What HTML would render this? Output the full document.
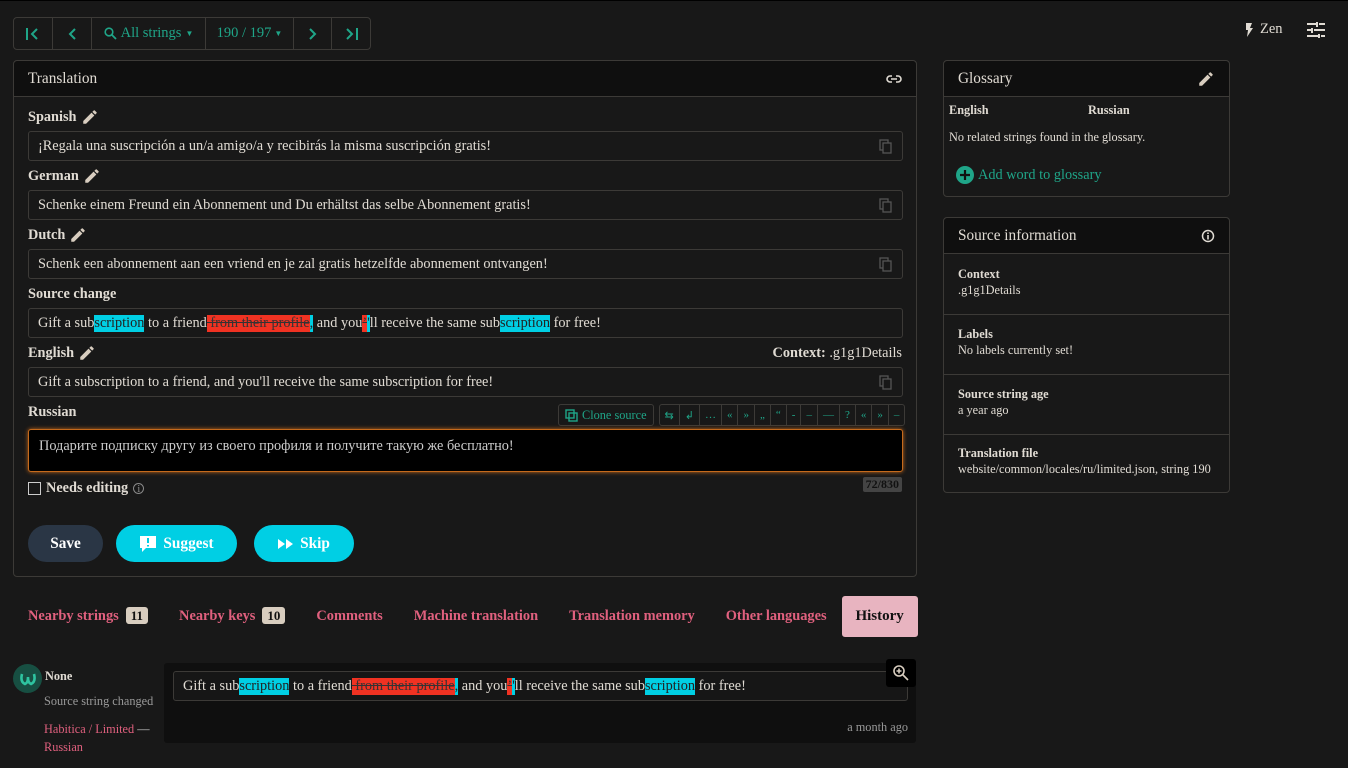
<!DOCTYPE html>
<html><head><meta charset="utf-8"><style>
*{box-sizing:border-box;margin:0;padding:0}
body{width:1348px;height:768px;background:#181818;font-family:"Liberation Serif",serif;color:#e0dbd3;font-size:14px;position:relative;overflow:hidden;border-top:1px solid #000}
.abs{position:absolute}
.g{color:#1fa588}
.nav{left:13px;top:16px;height:33px;border:1px solid #3c3a37;border-radius:4px;display:flex}
.nav div{border-right:1px solid #3c3a37;display:flex;align-items:center;justify-content:center;color:#1fa588;font-size:14.5px}
.nav div:last-child{border-right:none}
.panel{border:1px solid #3c3a37;border-radius:4px;background:#181818}
.ph{background:#0f0f0f;border-bottom:1px solid #3c3a37;height:36px;padding:0 14px;display:flex;align-items:center;justify-content:space-between;font-size:15.3px;border-radius:4px 4px 0 0}
.lbl{position:absolute;left:14px;font-weight:bold;font-size:14.3px;display:flex;align-items:center;gap:4px}
.inp{position:absolute;left:14px;width:875px;height:30px;border:1px solid #3c3a37;border-radius:3px;padding:0 9px;display:flex;align-items:center;font-size:14.3px}
.cp{position:absolute;right:10px;top:7px}
.hc{background:#00cfe4;color:#222}
.hr{background:#f03222;color:#333;text-decoration:line-through}
.btn{position:absolute;top:464px;height:37px;border-radius:19px;display:flex;align-items:center;justify-content:center;font-weight:bold;color:#fff;font-size:15.3px;gap:6px}
.tabs{top:595px;left:13px;height:41px;display:flex;align-items:center;font-weight:bold;color:#e0607e;font-size:14.4px}
.badge{background:#d8cdbf;color:#111;border-radius:3px;padding:1px 5px;font-size:13px;margin-left:7px}
.tb{display:flex;border:1px solid #3c3a37;border-radius:3px;height:22px}
.tb span{border-right:1px solid #3c3a37;padding:0 5px;color:#1fa588;font-size:11px;display:flex;align-items:center}
.tb span:last-child{border-right:none}
.sl{font-weight:bold;font-size:12.3px}
.sv{font-size:12.3px}
</style></head><body>
<div class="abs nav">
<div style="width:39px"><svg width="16" height="14" viewBox="0 0 16 14"><path d="M2 1v12M12 2L7 7l5 5" stroke="#1fa588" stroke-width="2" fill="none"/></svg></div>
<div style="width:39px"><svg width="10" height="14"><path d="M8 2L3 7l5 5" stroke="#1fa588" stroke-width="2" fill="none"/></svg></div>
<div style="width:114px;gap:4px"><svg width="13" height="13"><circle cx="5" cy="5" r="3.8" stroke="#1fa588" stroke-width="1.6" fill="none"/><path d="M8 8l4 4" stroke="#1fa588" stroke-width="1.8"/></svg>All strings <span style="font-size:8px">▼</span></div>
<div style="width:88px">190 / 197 <span style="font-size:8px;margin-left:3px">▼</span></div>
<div style="width:38px"><svg width="10" height="14"><path d="M2 2l5 5-5 5" stroke="#1fa588" stroke-width="2" fill="none"/></svg></div>
<div style="width:38px"><svg width="16" height="14"><path d="M4 2l5 5-5 5M14 1v12" stroke="#1fa588" stroke-width="2" fill="none"/></svg></div>
</div>
<div class="abs" style="left:1244px;top:20px;display:flex;align-items:center;gap:6px;font-size:14.5px"><svg width="10" height="16"><path d="M2 1h6L6 6h3L3 15l1-7H2z" fill="#e0dbd3"/></svg>Zen</div>
<svg class="abs" style="left:1307px;top:21px" width="18" height="16"><path d="M0 2h9M12 2h6M0 8h4M7 8h11M0 14h11M14 14h4M10 0v5M5 6v5M12 12v4" stroke="#e0dbd3" stroke-width="2"/></svg>

<div class="abs panel" style="left:13px;top:59px;width:904px;height:517px">
<div class="ph">Translation <svg width="16" height="10"><path d="M6 2H4a3 3 0 000 6h2M10 2h2a3 3 0 010 6h-2M5 5h6" stroke="#e0dbd3" stroke-width="1.6" fill="none"/></svg></div>
<div class="lbl" style="top:47px">Spanish <svg width="18" height="18" viewBox="0 0 24 24"><path d="M3 17.25V21h3.75L17.81 9.94l-3.75-3.75zM20.71 7.04a1 1 0 000-1.41l-2.34-2.34a1 1 0 00-1.41 0l-1.83 1.83 3.75 3.75z" fill="#d8cdbf"/></svg></div>
<div class="inp" style="top:70px">¡Regala una suscripción a un/a amigo/a y recibirás la misma suscripción gratis!<svg class="cp" width="13" height="15"><rect x="1" y="1" width="8" height="10" fill="none" stroke="#555" stroke-width="1.3"/><rect x="4" y="4" width="8" height="10" fill="#181818" stroke="#555" stroke-width="1.3"/></svg></div>
<div class="lbl" style="top:106px">German <svg width="18" height="18" viewBox="0 0 24 24"><path d="M3 17.25V21h3.75L17.81 9.94l-3.75-3.75zM20.71 7.04a1 1 0 000-1.41l-2.34-2.34a1 1 0 00-1.41 0l-1.83 1.83 3.75 3.75z" fill="#d8cdbf"/></svg></div>
<div class="inp" style="top:129px">Schenke einem Freund ein Abonnement und Du erhältst das selbe Abonnement gratis!<svg class="cp" width="13" height="15"><rect x="1" y="1" width="8" height="10" fill="none" stroke="#555" stroke-width="1.3"/><rect x="4" y="4" width="8" height="10" fill="#181818" stroke="#555" stroke-width="1.3"/></svg></div>
<div class="lbl" style="top:165px">Dutch <svg width="18" height="18" viewBox="0 0 24 24"><path d="M3 17.25V21h3.75L17.81 9.94l-3.75-3.75zM20.71 7.04a1 1 0 000-1.41l-2.34-2.34a1 1 0 00-1.41 0l-1.83 1.83 3.75 3.75z" fill="#d8cdbf"/></svg></div>
<div class="inp" style="top:188px">Schenk een abonnement aan een vriend en je zal gratis hetzelfde abonnement ontvangen!<svg class="cp" width="13" height="15"><rect x="1" y="1" width="8" height="10" fill="none" stroke="#555" stroke-width="1.3"/><rect x="4" y="4" width="8" height="10" fill="#181818" stroke="#555" stroke-width="1.3"/></svg></div>
<div class="lbl" style="top:225px">Source change</div>
<div class="inp" style="top:247px;white-space:pre">Gift a sub<span class="hc">scription</span> to a friend<span class="hr"> from their profile</span><span class="hc">,</span> and you<span class="hr">’</span><span class="hc">'</span>ll receive the same sub<span class="hc">scription</span> for free!</div>
<div class="lbl" style="top:283px">English <svg width="18" height="18" viewBox="0 0 24 24"><path d="M3 17.25V21h3.75L17.81 9.94l-3.75-3.75zM20.71 7.04a1 1 0 000-1.41l-2.34-2.34a1 1 0 00-1.41 0l-1.83 1.83 3.75 3.75z" fill="#d8cdbf"/></svg></div>
<div class="abs" style="right:14px;top:284px;font-size:14.3px"><b>Context:</b> .g1g1Details</div>
<div class="inp" style="top:306px">Gift a subscription to a friend, and you'll receive the same subscription for free!<svg class="cp" width="13" height="15"><rect x="1" y="1" width="8" height="10" fill="none" stroke="#555" stroke-width="1.3"/><rect x="4" y="4" width="8" height="10" fill="#181818" stroke="#555" stroke-width="1.3"/></svg></div>
<div class="lbl" style="top:343px">Russian</div>
<div class="abs" style="left:544px;top:343px;display:flex;gap:5px">
<div class="tb"><span style="gap:4px;font-size:12.3px;padding:0 6px"><svg width="13" height="13"><rect x="1" y="1" width="8" height="8" fill="none" stroke="#1fa588" stroke-width="1.4"/><rect x="4" y="4" width="8" height="8" fill="none" stroke="#1fa588" stroke-width="1.4"/></svg>Clone source</span></div>
<div class="tb"><span>⇆</span><span>↲</span><span>…</span><span>«</span><span>»</span><span>„</span><span>“</span><span>-</span><span>–</span><span>—</span><span>?</span><span>«</span><span>»</span><span>–</span></div>
</div>
<div class="abs" style="left:14px;top:368px;width:875px;height:43px;background:#000;border:1px solid #c56a1c;border-radius:3px;box-shadow:0 0 4px #c56a1c;padding:8px 10px;font-size:14.3px;color:#ccc">Подарите подписку другу из своего профиля и получите такую же бесплатно!</div>
<div class="abs" style="left:14px;top:419px;display:flex;align-items:center;gap:5px;font-weight:bold;font-size:14.3px"><span style="width:13px;height:13px;border:1px solid #ccc"></span>Needs editing <span style="font-size:11px;color:#888;border:1px solid #888;border-radius:50%;width:11px;height:11px;display:inline-flex;align-items:center;justify-content:center;font-weight:normal">i</span></div>
<div class="abs" style="right:14px;top:416px;background:#444;color:#111;font-weight:bold;font-size:12px;padding:0 3px;border-radius:2px">72/830</div>
<div class="btn" style="left:14px;width:75px;background:#2a3645">Save</div>
<div class="btn" style="left:102px;width:121px;background:#00cfe4"><svg width="18" height="18"><path d="M1 1h16v12H7l-4 4v-4H1z" fill="#fff"/><path d="M9 3v5M9 10v1.5" stroke="#00cfe4" stroke-width="2"/></svg>Suggest</div>
<div class="btn" style="left:240px;width:100px;background:#00cfe4"><svg width="16" height="10"><path d="M0 0l7 5-7 5zM8 0l7 5-7 5z" fill="#fff"/></svg>Skip</div>
</div>

<div class="abs tabs">
<span style="margin-left:15px">Nearby strings<span class="badge">11</span></span>
<span style="margin-left:31px">Nearby keys<span class="badge">10</span></span>
<span style="margin-left:31px">Comments</span>
<span style="margin-left:31px">Machine translation</span>
<span style="margin-left:31px">Translation memory</span>
<span style="margin-left:31px">Other languages</span>
<span style="margin-left:15px;background:#e8b4c0;color:#111;height:41px;width:76px;border-radius:3px;display:flex;align-items:center;justify-content:center;font-size:15px">History</span>
</div>

<div class="abs" style="left:13px;top:663px;width:29px;height:29px;border-radius:50%;background:#174f42;display:flex;align-items:center;justify-content:center"><svg width="18" height="14"><path d="M3 2q-2 8 3 10q3-1 3-7q0 6 3 7q5-2 3-10" stroke="#2ec4a0" stroke-width="2.6" fill="none"/></svg></div>
<div class="abs" style="left:45px;top:668px;font-weight:bold;font-size:12.3px">None</div>
<div class="abs" style="left:44px;top:693px;font-size:12.3px;color:#999">Source string changed</div>
<div class="abs" style="left:44px;top:719px;font-size:12.3px;color:#e0607e;line-height:18px;width:120px">Habitica / Limited <span style="color:#ccc">—</span><br>Russian</div>
<div class="abs" style="left:164px;top:662px;width:752px;height:80px;background:#0f0f0f;border-radius:3px">
<div class="abs" style="left:9px;top:8px;width:735px;height:30px;border:1px solid #3c3a37;border-radius:3px;padding:0 9px;display:flex;align-items:center;white-space:pre;background:#161616;font-size:14.3px">Gift a sub<span class="hc">scription</span> to a friend<span class="hr"> from their profile</span><span class="hc">,</span> and you<span class="hr">’</span><span class="hc">'</span>ll receive the same sub<span class="hc">scription</span> for free!</div>
<div class="abs" style="right:8px;top:57px;font-size:12.3px;color:#999">a month ago</div>
</div>
<div class="abs" style="left:886px;top:658px;width:30px;height:28px;background:#000;border-radius:3px;display:flex;align-items:center;justify-content:center"><svg width="18" height="18"><circle cx="7" cy="7" r="5" stroke="#d8cdbf" stroke-width="1.6" fill="none"/><path d="M7 4.5v5M4.5 7h5M11 11l5 5" stroke="#d8cdbf" stroke-width="1.6"/></svg></div>

<div class="abs panel" style="left:943px;top:59px;width:287px;height:137px">
<div class="ph">Glossary <svg width="18" height="18" viewBox="0 0 24 24"><path d="M3 17.25V21h3.75L17.81 9.94l-3.75-3.75zM20.71 7.04a1 1 0 000-1.41l-2.34-2.34a1 1 0 00-1.41 0l-1.83 1.83 3.75 3.75z" fill="#d8cdbf"/></svg></div>
<div class="abs sl" style="left:5px;top:42px">English</div><div class="abs sl" style="left:144px;top:42px">Russian</div>
<div class="abs sv" style="left:5px;top:69px">No related strings found in the glossary.</div>
<div class="abs g" style="left:12px;top:105px;display:flex;align-items:center;gap:4px;font-size:14.3px"><svg width="18" height="18"><circle cx="9" cy="9" r="9" fill="#1fa588"/><path d="M9 4v10M4 9h10" stroke="#111" stroke-width="2.2"/></svg>Add word to glossary</div>
</div>
<div class="abs panel" style="left:943px;top:216px;width:287px;height:276px">
<div class="ph">Source information <svg width="14" height="14"><circle cx="7" cy="7" r="5.5" stroke="#e0dbd3" stroke-width="1.5" fill="none"/><path d="M7 6v4.5M7 3.5v1.5" stroke="#e0dbd3" stroke-width="1.6"/></svg></div>
<div class="abs sl" style="left:14px;top:49px">Context</div><div class="abs sv" style="left:14px;top:65px">.g1g1Details</div>
<div style="position:absolute;left:0;right:0;top:96px;border-top:1px solid #3c3a37"></div>
<div class="abs sl" style="left:14px;top:109px">Labels</div><div class="abs sv" style="left:14px;top:125px">No labels currently set!</div>
<div style="position:absolute;left:0;right:0;top:156px;border-top:1px solid #3c3a37"></div>
<div class="abs sl" style="left:14px;top:169px">Source string age</div><div class="abs sv" style="left:14px;top:185px">a year ago</div>
<div style="position:absolute;left:0;right:0;top:216px;border-top:1px solid #3c3a37"></div>
<div class="abs sl" style="left:14px;top:228px">Translation file</div><div class="abs sv" style="left:14px;top:244px">website/common/locales/ru/limited.json, string 190</div>
</div>
</body></html>
